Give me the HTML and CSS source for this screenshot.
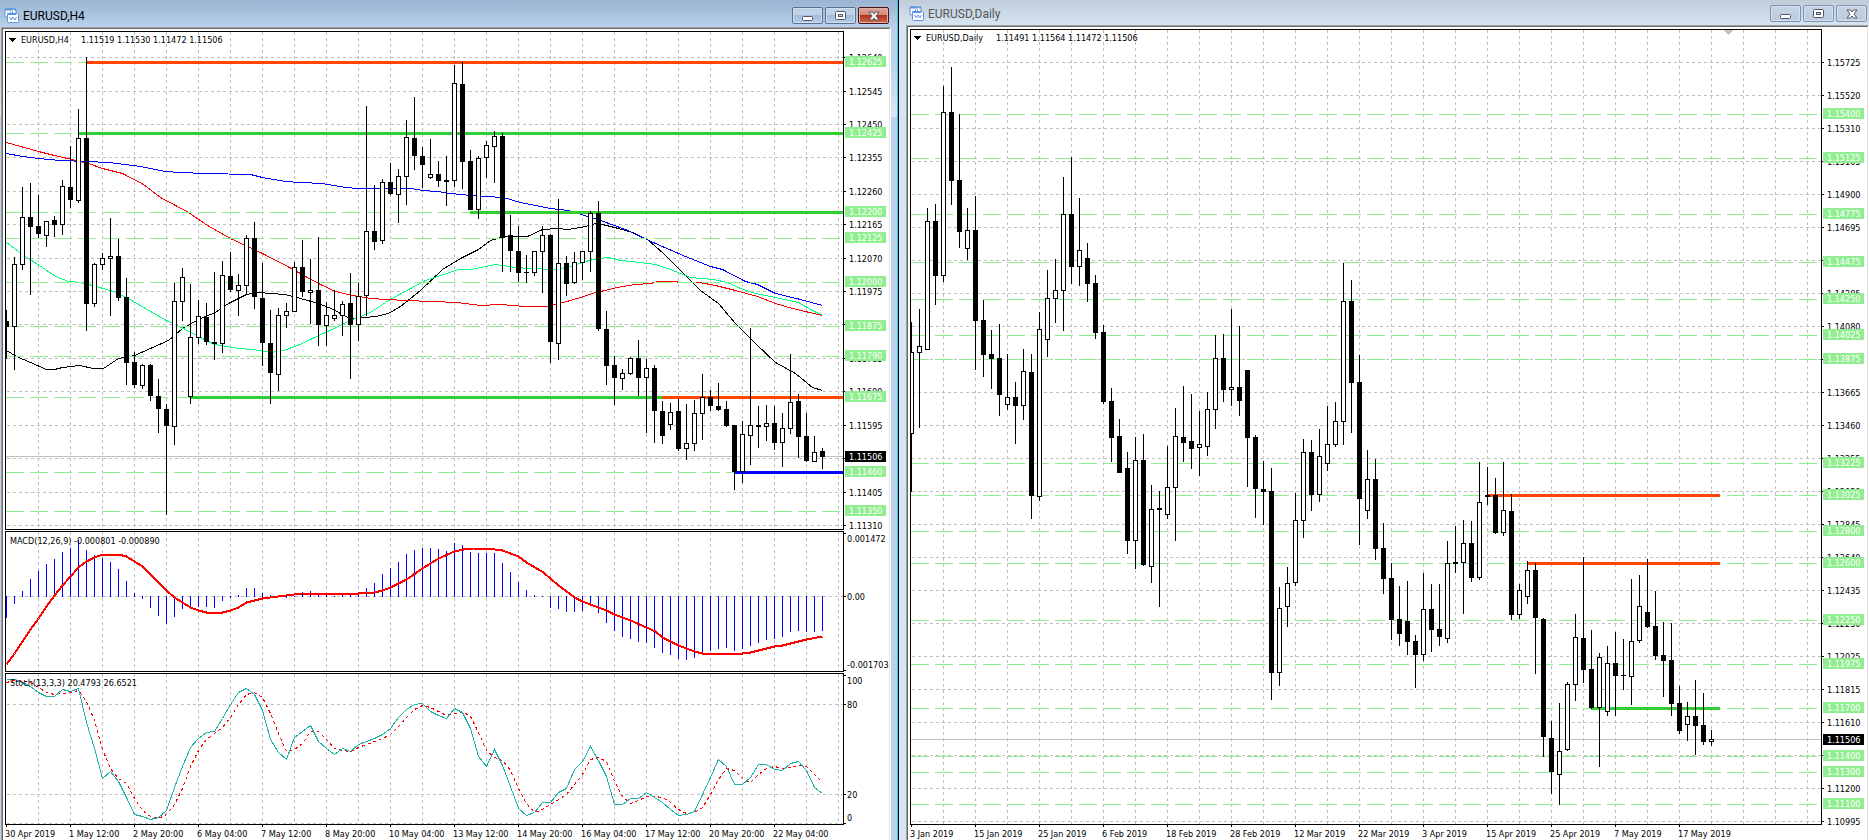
FILE: index.html
```html
<!DOCTYPE html>
<html lang="en">
<head>
    <meta charset="UTF-8">
    <meta name="viewport" content="width=device-width, initial-scale=1.0">
    <title>EURUSD charts</title>
    <link rel="stylesheet" href="styles.css">
</head>
<body>
    <svg class="defs" width="0" height="0">
        <symbol id="icon-chart" viewBox="0 0 15 15">
            <rect x="1" y="1" width="11" height="8" rx="1" fill="#fff" stroke="#5b93e0"/>
            <path d="M1 1.5h11" stroke="#5b93e0" stroke-width="2" stroke-dasharray="8 1"/>
            <path d="M3 6.5h1v-2M6.5 3.500v2h2v-2" fill="none" stroke="#5b93e0"/>
            <rect x="3.500" y="5.500" width="11" height="9" rx="1" fill="#fff" stroke="#5b93e0"/>
            <path d="M4 6.500h8" stroke="#5b93e0"/>
            <path d="M5.500 9l2 3 1.500-3 2 3 1.500-3" fill="none" stroke="#5b93e0"/>
        </symbol>
        <symbol id="icon-min" viewBox="0 0 12 12">
            <rect x="0.500" y="6.500" width="10" height="4" rx="1" fill="#fff" stroke="#535666"/>
        </symbol>
        <symbol id="icon-max" viewBox="0 0 12 12">
            <rect x="0.500" y="1.500" width="10" height="8" rx="1" fill="#fff" stroke="#535666"/>
            <rect x="3.500" y="4.500" width="4" height="2" fill="#c3d4e8" stroke="#535666"/>
        </symbol>
        <symbol id="icon-close" viewBox="0 0 12 12">
            <path d="M1 2h3.500L6 4l1.500-2H11L8 6l3 4H7.500L6 8l-1.500 2H1l3-4z" fill="#fff" stroke="#535666"/>
        </symbol>
    </svg>

    <main class="workspace">
        <section class="window active">
            <header class="title-bar">
                <svg class="app-icon"><use href="#icon-chart"/></svg>
                <h1>EURUSD,H4</h1>
                <button type="button" aria-label="Minimize"><svg><use href="#icon-min"/></svg></button>
                <button type="button" aria-label="Maximize"><svg><use href="#icon-max"/></svg></button>
                <button type="button" class="close" aria-label="Close"><svg><use href="#icon-close"/></svg></button>
            </header>
            <div class="frame">
                <div class="chart">
                    <div class="pane"><svg class="plot price" id="h4Price"></svg><svg class="scale" id="h4PriceScale"></svg></div>
                    <div class="pane"><svg class="plot macd" id="h4Macd"></svg><svg class="scale" id="h4MacdScale"></svg></div>
                    <div class="pane"><svg class="plot stoch" id="h4Stoch"></svg><svg class="scale" id="h4StochScale"></svg></div>
                    <svg class="time" id="h4Time"></svg>
                </div>
            </div>
        </section>

        <section class="window">
            <header class="title-bar">
                <svg class="app-icon"><use href="#icon-chart"/></svg>
                <h1>EURUSD,Daily</h1>
                <button type="button" aria-label="Minimize"><svg><use href="#icon-min"/></svg></button>
                <button type="button" aria-label="Maximize"><svg><use href="#icon-max"/></svg></button>
                <button type="button" class="close" aria-label="Close"><svg><use href="#icon-close"/></svg></button>
            </header>
            <div class="frame">
                <div class="chart">
                    <div class="pane"><svg class="plot daily" id="d1Price"></svg><svg class="scale" id="d1PriceScale"></svg></div>
                    <svg class="time" id="d1Time"></svg>
                </div>
            </div>
        </section>
    </main>

    <script src="script.js"></script>
</body>
</html>
```
FILE: styles.css
```css
* {
    box-sizing: border-box;
}
body {
    margin: 0;
    background-color: #fff;
    font-family: "DejaVu Sans Condensed", "Open Sans", sans-serif;
    overflow: hidden;
}
.defs {
    position: absolute;
}
.workspace {
    display: grid;
    grid-template-columns: 898fr 971fr;
    min-height: 100vh;
}
.window {
    display: flex;
    flex-direction: column;
    min-width: 0;
    padding-left: 7px;
    border-left: 1px solid #000;
    background-color: #d7e4f2;
}
.window.active {
    padding: 0 6px 0 1px;
    border-left: none;
    border-right: 1px solid #35c5e8;
    background: linear-gradient(#b9d1ea 27px, #b9d1ea 60px, #dbe7f5 117px, #b9d1ea 117px);
}

/* title bar */
.title-bar {
    display: flex;
    align-items: center;
    gap: 2px;
    height: 25px;
    margin-left: -7px;
    padding: 5px 2px 3px 10px;
    background: linear-gradient(#bfcddb, #d7e4f2);
}
.active .title-bar {
    height: 27px;
    margin: 0 -6px 0 -1px;
    padding: 7px 8px 3px 4px;
    background: linear-gradient(#99b4d1, #b9d1ea);
}
.app-icon {
    width: 15px;
    height: 15px;
}
.title-bar h1 {
    flex: 1;
    margin: 0 0 0 2px;
    font-family: Roboto, "Open Sans", sans-serif;
    font-size: 12px;
    font-weight: 400;
    line-height: 16px;
    color: #555;
}
.active .title-bar h1 {
    color: #000;
}
.title-bar button {
    display: flex;
    align-items: center;
    justify-content: center;
    width: 31px;
    height: 17px;
    padding: 0;
    border: 1px solid #7f8fb0;
    border-radius: 2px;
    background: linear-gradient(#c5d4e4, #bccbdd);
    box-shadow: inset 0 0 0 1px #d3e0ee;
}
.active .title-bar button {
    border-color: #5d6f8e;
    background: linear-gradient(#bfd2e7 50%, #a5bedb 50%, #b4cde8);
    box-shadow: inset 0 0 0 1px #cfdff0;
}
.active .title-bar .close {
    border-color: #4c1116;
    background: linear-gradient(#dda69a, #cf8675 50%, #b0351f 50%, #cf6a4e);
    box-shadow: inset 0 0 0 1px #e3b0a5;
}
.title-bar button svg {
    width: 12px;
    height: 12px;
}

/* sunken frame round the chart */
.frame {
    flex: 1;
    border: solid;
    border-width: 1px 1px 0 1px;
    border-color: #a0a0a0 #fff #fff #a0a0a0;
}
.chart {
    height: 100%;
    padding: 2px 0 0 2px;
    border: solid;
    border-width: 1px 1px 0 1px;
    border-color: #696969 #e3e3e3 #fff #696969;
    background-color: #fff;
}
.pane {
    display: flex;
    margin-bottom: 1px;
}
.pane:nth-last-child(2) {
    margin-bottom: 0;
}
.plot {
    flex: 1;
    min-width: 0;
    border: 1px solid #000;
}
.scale {
    width: 45px;
}
.price, .price + .scale {
    height: 499px;
}
.macd, .macd + .scale {
    height: 141px;
}
.stoch, .stoch + .scale {
    height: 152px;
}
.daily, .daily + .scale {
    height: 796px;
}
.daily + .scale {
    overflow: visible;
}
.time {
    display: block;
    width: 100%;
    height: 15px;
}

/* drawing */
.plot g, .scale g, .time g {
    shape-rendering: crispEdges;
}
text {
    font-size: 9px;
    fill: #000;
}
.grid {
    stroke: #c0c0c0;
    stroke-dasharray: 3 3;
}
.bid {
    stroke: #c0c0c0;
}
.level {
    stroke: #90ee90;
    stroke-dasharray: 18 6;
}
.tick, .wick {
    stroke: #000;
}
.bear {
    fill: #000;
}
.bull {
    fill: #fff;
    stroke: #000;
}
.tag {
    fill: #90ee90;
}
.tag-bid {
    fill: #000;
}
.tag-text {
    fill: #fff;
}
.marker {
    fill: #c0c0c0;
}
.line {
    fill: none;
}
.orange {
    stroke: #ff4500;
    stroke-width: 3;
}
.lime {
    stroke: #32cd32;
    stroke-width: 3;
}
.navy {
    stroke: #0000ff;
    stroke-width: 3;
}
.ma-red {
    stroke: #ff0000;
}
.ma-blue, .bar {
    stroke: #0000ff;
}
.ma-black {
    stroke: #000;
}
.ma-green {
    stroke: #00ff7f;
}
.macd-signal {
    stroke: #ff0000;
    stroke-width: 2;
}
.stoch-main {
    stroke: #20b2aa;
}
.stoch-signal {
    stroke: #ff0000;
    stroke-dasharray: 3 3;
}
```
FILE: script.js
```js
const NS = 'http://www.w3.org/2000/svg';
const STEP = 8;
const FAR = 4000;

// candles: [high, top, bottom, low, bull]
const h4Candles = [
    [310,321,327,359,0],[257,264,326,370,1],[187,217,264,270,1],[183,217,227,295,0],[195,226,234,238,0],
    [221,221,235,247,1],[216,220,225,237,0],[180,186,224,235,1],[146,187,200,208,0],[109,138,200,203,1],
    [57,138,304,331,0],[263,264,303,307,1],[253,258,264,270,1],[218,256,258,316,1],[239,256,298,301,0],
    [278,297,363,385,0],[352,362,385,388,0],[364,365,385,389,1],[364,365,396,401,0],[379,396,409,433,0],
    [404,409,426,515,0],[283,301,426,445,1],[268,277,301,321,1],[284,337,396,404,1],[300,316,337,344,1],
    [303,317,342,345,0],[272,342,344,360,0],[261,275,343,353,1],[252,276,290,292,0],[274,285,290,316,1],
    [235,238,285,295,1],[222,238,297,309,0],[263,298,343,366,0],[310,343,373,404,0],[308,315,374,391,1],
    [303,311,315,328,1],[262,267,311,311,1],[240,267,292,297,0],[259,290,292,324,1],[237,290,325,346,0],
    [302,315,325,346,1],[290,315,318,321,1],[301,304,315,336,1],[273,303,325,379,0],[283,296,324,341,1],
    [106,231,295,316,1],[185,231,242,250,0],[179,182,240,244,1],[163,182,194,195,0],[169,176,194,223,1],
    [120,137,176,205,1],[97,138,156,170,0],[147,156,165,188,0],[139,174,177,179,1],[161,174,181,187,0],
    [156,180,182,206,0],[65,83,180,187,1],[62,84,162,189,0],[150,161,210,210,0],[156,158,209,219,1],
    [141,145,157,178,1],[131,136,146,183,1],[133,136,237,272,0],[215,235,251,272,0],[226,251,273,282,0],
    [255,272,273,283,0],[251,251,272,276,1],[226,235,251,293,1],[234,235,342,363,0],[199,263,343,360,1],
    [256,263,284,296,0],[252,262,282,284,1],[251,251,262,280,1],[211,213,251,272,1],[201,213,329,331,0],
    [311,329,366,385,0],[356,365,378,405,0],[369,373,378,390,1],[357,358,373,375,1],[340,358,378,396,0],
    [359,368,377,433,1],[365,368,411,443,0],[401,411,436,444,0],[403,412,424,430,1],[399,411,449,451,0],
    [404,443,448,460,1],[400,413,443,451,1],[374,397,413,440,1],[390,397,406,411,0],[383,406,410,411,0],
    [401,409,426,427,0],[425,425,472,490,0],[421,434,471,483,1],[328,425,435,465,1],[406,425,427,448,0],
    [405,423,426,441,1],[406,423,443,450,0],[413,428,442,467,1],[354,402,428,434,1],[394,401,437,458,0],
    [413,436,461,462,0],[436,452,461,462,1],[448,451,457,469,0]
];
const d1Candles = [
    [322,352,433,492,1],[309,346,352,428,1],[208,221,349,349,1],[204,221,276,305,0],[86,112,275,282,1],
    [67,112,181,205,0],[114,180,232,248,0],[208,230,248,260,1],[196,230,321,370,0],[300,320,355,377,0],
    [330,354,359,389,0],[324,358,395,416,0],[354,397,404,410,1],[382,397,406,444,0],[349,371,405,420,1],
    [354,372,496,519,0],[312,329,496,501,1],[270,298,339,357,1],[259,290,298,323,1],[177,214,290,331,1],
    [157,214,267,284,0],[198,250,266,286,1],[243,258,284,302,0],[275,283,333,339,0],[325,332,402,404,0],
    [388,401,438,462,0],[419,436,473,473,0],[452,468,541,554,0],[437,460,540,569,1],[434,460,565,566,0],
    [485,509,566,583,1],[491,508,510,607,0],[446,487,514,519,1],[408,436,487,541,1],[386,437,443,462,0],
    [394,441,449,469,0],[411,444,447,476,1],[392,409,446,456,1],[335,358,409,429,1],[334,358,390,402,0],
    [309,387,389,406,1],[326,387,401,416,0],[370,370,438,487,0],[435,437,489,518,0],[461,489,492,525,0],
    [468,491,673,700,0],[587,608,672,686,1],[567,583,606,627,1],[493,520,582,586,1],[439,452,520,538,1],
    [440,452,495,511,0],[429,456,494,502,1],[406,444,463,471,1],[402,421,444,447,1],[263,301,421,445,1],
    [280,301,383,433,0],[355,382,499,545,0],[450,479,510,519,1],[459,479,549,560,0],[523,548,579,594,0],
    [563,578,620,640,0],[586,619,634,646,0],[581,621,642,655,0],[635,641,655,688,0],[573,609,654,661,1],
    [584,609,630,652,0],[584,629,637,646,0],[541,563,638,643,1],[526,562,564,573,0],[520,543,562,614,1],
    [521,543,578,582,0],[462,502,577,580,1],[467,495,497,505,0],[478,495,533,534,0],[462,510,532,536,1],
    [494,511,615,620,0],[584,590,614,619,1],[561,570,596,604,1],[563,570,618,674,0],[618,619,737,757,0],
    [721,738,772,794,0],[703,751,774,805,1],[682,684,749,751,1],[614,637,684,701,1],[557,638,670,683,0],
    [630,669,708,709,0],[653,657,707,767,1],[646,663,711,716,1],[632,663,676,716,0],[639,675,676,690,0],
    [579,641,676,705,1],[575,606,640,643,1],[559,612,627,628,0],[591,626,656,660,0],[622,655,661,697,0],
    [623,660,704,716,0],[686,703,731,734,0],[702,716,724,741,1],[680,716,726,755,0],[693,725,742,745,0],
    [730,739,741,746,1]
];

// indicator lines: x, y pairs
const maRed = '0,142 32,151 48,155 70,160 82,163 96,168 116,173 137,184 154,197 182,212 201,225 224,238 256,253 285,268 299,276 314,284 329,291 346,295 364,298 399,300 451,302 474,305 494,304 519,306 539,306 557,302 574,297 589,292 594,291 611,287 629,284 644,283 648,282 652,281 669,281 673,282 693,282 709,285 729,290 751,296 769,303 786,308 816,315';
const maBlue = '0,153 16,156 32,158 54,160 80,161 102,162 134,166 159,171 174,172 199,173 244,174 256,177 279,181 294,182 316,183 339,187 351,188 404,188 416,190 431,191 444,193 464,195 479,196 497,197 514,202 544,208 562,210 575,214 594,220 619,229 634,236 649,243 679,256 704,266 716,269 739,281 751,284 769,293 794,299 816,305';
const maBlack = '0,350 10,356 24,362 40,369 48,369 56,367 73,365 87,368 97,368 112,358 128,355 144,348 162,340 176,328 194,318 209,312 222,303 240,294 252,292 264,293 279,294 294,298 312,303 327,309 339,316 346,318 369,316 382,313 394,306 414,290 436,269 456,257 472,249 484,240 494,237 504,236 521,236 536,229 551,228 562,229 579,226 589,223 596,224 612,228 626,232 641,239 657,253 672,268 694,290 712,303 729,323 749,343 769,362 789,373 806,387 816,390';
const maGreen = '0,242 16,254 39,269 49,276 62,281 74,282 90,286 110,292 127,301 144,311 160,320 177,328 194,337 208,344 232,348 247,349 264,352 277,350 291,345 319,332 344,320 364,312 382,300 404,288 419,280 452,269 464,269 479,266 489,264 509,267 524,268 549,269 564,266 579,261 591,258 602,257 614,260 634,262 649,264 664,269 684,277 707,279 721,282 734,288 749,293 769,297 792,302 806,310 816,315';
const macdBars = [618,604,591,579,571,564,559,552,548,540,550,555,558,562,569,581,593,599,608,616,624,617,609,609,607,607,608,601,598,595,588,588,593,595,596,598,597,592,591,593,594,597,595,594,593,588,583,574,568,562,554,550,548,548,549,551,543,545,552,553,553,553,563,572,582,590,595,596,608,609,612,612,611,605,613,623,631,637,639,642,643,648,653,655,659,660,658,653,651,649,648,651,649,646,643,640,639,637,632,631,632,632,631];
const macdSignal = '0,664 8,653 24,629 32,618 40,606 48,595 56,585 64,576 72,567 80,561 88,557 96,554 112,554 120,556 136,566 144,574 152,582 160,590 168,597 176,602 184,607 192,610 200,612 216,612 224,610 232,607 240,602 256,598 272,596 296,593 352,593 368,592 376,590 384,587 400,579 416,568 432,558 448,551 457,549 467,548 481,548 496,550 512,556 520,562 537,572 552,585 568,597 576,601 600,610 608,614 624,620 640,627 649,631 656,637 672,645 688,651 696,653 736,653 744,652 768,646 776,645 800,639 816,636';
const stochMain = [679,679,682,686,692,696,696,689,691,688,722,748,778,771,781,797,814,816,819,817,810,787,766,747,738,732,731,718,704,692,688,694,710,739,752,759,737,731,725,741,748,754,748,751,744,741,738,734,728,717,709,704,703,711,715,718,708,712,728,756,766,749,765,786,808,815,812,802,802,792,788,769,761,746,760,776,804,804,798,798,792,797,802,809,815,814,811,794,777,759,766,784,784,777,764,764,769,770,763,761,770,787,793];
const stochSignal = [682,680,680,682,687,692,694,693,692,690,701,720,749,768,778,783,798,810,816,818,814,804,788,766,750,739,733,727,717,704,694,692,697,713,733,751,749,743,731,731,739,748,750,751,747,744,741,738,734,726,717,709,705,707,711,715,713,711,716,732,750,757,760,770,788,803,812,809,804,799,794,784,774,759,757,761,781,796,803,800,796,796,797,802,809,813,812,807,794,779,768,770,778,782,774,768,766,768,767,765,766,774,782];

// price scales: [y, price]
const h4Grid = [[57,'1.12640'],[91,'1.12545'],[124,'1.12450'],[157,'1.12355'],[191,'1.12260'],[224,'1.12165'],[258,'1.12070'],[291,'1.11975'],[324,'1.11880'],[358,'1.11785'],[391,'1.11690'],[425,'1.11595'],[458,'1.11500'],[492,'1.11405'],[525,'1.11310']];
const h4Levels = [[62,'1.12625'],[133,'1.12425'],[212,'1.12200'],[238,'1.12125'],[282,'1.12000'],[326,'1.11875'],[356,'1.11790'],[397,'1.11675'],[472,'1.11460'],[511,'1.11350']];
const d1Prices = ['1.15725','1.15520','1.15310','1.15105','1.14900','1.14695','1.14490','1.14285','1.14080','1.13870','1.13665','1.13460','1.13255','1.13050','1.12845','1.12640','1.12435','1.12230','1.12025','1.11815','1.11610','1.11405','1.11200','1.10995'];
const d1Grid = d1Prices.map((price, i) => [62 + i * 33, price]);
const d1Levels = [[114,'1.15400'],[158,'1.15125'],[214,'1.14775'],[262,'1.14475'],[299,'1.14250'],[335,'1.14025'],[359,'1.13875'],[463,'1.13225'],[495,'1.13025'],[531,'1.12800'],[563,'1.12600'],[620,'1.12250'],[664,'1.11975'],[708,'1.11700'],[756,'1.11400'],[772,'1.11300'],[804,'1.11100']];

const h4Dates = ['30 Apr 2019','1 May 12:00','2 May 20:00','6 May 04:00','7 May 12:00','8 May 20:00','10 May 04:00','13 May 12:00','14 May 20:00','16 May 04:00','17 May 12:00','20 May 20:00','22 May 04:00'];
const d1Dates = ['3 Jan 2019','15 Jan 2019','25 Jan 2019','6 Feb 2019','18 Feb 2019','28 Feb 2019','12 Mar 2019','22 Mar 2019','3 Apr 2019','15 Apr 2019','25 Apr 2019','7 May 2019','17 May 2019'];

function add(parent, tag, attrs, content) {
    const el = document.createElementNS(NS, tag);
    for (const key in attrs) el.setAttribute(key, attrs[key]);
    if (content) el.textContent = content;
    parent.appendChild(el);
    return el;
}

// every pane is drawn in chart coordinates, shifted up by its own top
function layer(id, top) {
    return add(document.getElementById(id), 'g', { transform: `translate(0 ${-top})` });
}

function hline(g, cls, y, x1 = 0, x2 = FAR) {
    add(g, 'line', { class: cls, x1: x1, x2: x2, y1: y + 0.5, y2: y + 0.5 });
}

function vline(g, cls, x, y1, y2) {
    add(g, 'line', { class: cls, x1: x + 0.5, x2: x + 0.5, y1: y1, y2: y2 });
}

function columns(g, top, bottom) {
    for (let x = 32; x < FAR; x += 32) vline(g, 'grid', x, top, bottom);
}

function curve(g, cls, points) {
    if (Array.isArray(points)) points = points.map((y, i) => `${i * STEP},${y}`).join(' ');
    add(g, 'polyline', { class: 'line ' + cls, points: points, transform: 'translate(0.5 0.5)' });
}

function label(g, x, y, content, cls = '') {
    add(g, 'text', { x: x, y: y, class: cls }, content);
}

function info(g, y, name, valuesX) {
    add(g, 'path', { d: `M3 ${y - 5}h7l-3.500 4z` });
    label(g, 15, y, name[0]);
    label(g, valuesX, y, name[1]);
}

function drawCandles(g, candles) {
    candles.forEach(([high, top, bottom, low, bull], i) => {
        const x = i * STEP;
        vline(g, 'wick', x, high, low);
        if (bull) {
            add(g, 'rect', { class: 'bull', x: x - 1.5, y: top + 0.5, width: 4, height: bottom - top });
        } else {
            add(g, 'rect', { class: 'bear', x: x - 2, y: top, width: 5, height: bottom - top });
        }
    });
}

function drawScale(id, top, grid, levels, bid) {
    const g = layer(id, top);
    grid.forEach(([y, price]) => {
        hline(g, 'tick', y, 0, 2);
        label(g, 5, y + 4, price);
    });
    levels.forEach(([y, price]) => {
        add(g, 'rect', { class: 'tag', x: 1, y: y - 6, width: 41, height: 11 });
        label(g, 5, y + 3, price, 'tag-text');
    });
    add(g, 'rect', { class: 'tag-bid', x: 1, y: bid - 5, width: 41, height: 11 });
    label(g, 5, bid + 4, '1.11506', 'tag-text');
}

function drawTime(id, dates) {
    const g = layer(id, 0);
    dates.forEach((date, i) => {
        vline(g, 'tick', i * 64 + 1, 0, 2);
        label(g, i * 64, 12, date);
    });
}

// H4 price
let g = layer('h4Price', 32);
columns(g, 32, 529);
h4Grid.forEach(([y]) => hline(g, 'grid', y, 1));
curve(g, 'ma-black', maBlack);
curve(g, 'ma-green', maGreen);
curve(g, 'ma-red', maRed);
curve(g, 'ma-blue', maBlue);
h4Levels.forEach(([y]) => hline(g, 'level', y));
hline(g, 'bid', 456);
hline(g, 'orange', 62, 81);
hline(g, 'lime', 133, 73);
hline(g, 'lime', 212, 464);
hline(g, 'lime', 397, 184, 656);
hline(g, 'orange', 397, 656);
hline(g, 'navy', 472, 728);
drawCandles(g, h4Candles);
info(g, 43, ['EURUSD,H4', '1.11519 1.11530 1.11472 1.11506'], 75);
drawScale('h4PriceScale', 31, h4Grid, h4Levels, 456);

// MACD
g = layer('h4Macd', 532);
columns(g, 532, 671);
hline(g, 'grid', 596, 1);
macdBars.forEach((y, i) => vline(g, 'bar', i * STEP, Math.min(y, 596), Math.max(y, 597)));
curve(g, 'macd-signal', macdSignal);
label(g, 4, 544, 'MACD(12,26,9) -0.000801 -0.000890');
g = layer('h4MacdScale', 531);
[533, 596, 670].forEach(y => hline(g, 'tick', y, 0, 2));
label(g, 3, 542, '0.001472');
label(g, 3, 600, '0.00');
label(g, 3, 668, '-0.001703');

// Stochastic
g = layer('h4Stoch', 674);
columns(g, 674, 824);
[704, 794, 823].forEach(y => hline(g, 'grid', y, 1));
curve(g, 'stoch-signal', stochSignal);
curve(g, 'stoch-main', stochMain);
label(g, 4, 686, 'Stoch(13,3,3) 20.4793 26.6521');
g = layer('h4StochScale', 673);
[675, 704, 794, 823].forEach(y => hline(g, 'tick', y, 0, 2));
label(g, 3, 684, '100');
label(g, 3, 708, '80');
label(g, 3, 798, '20');
label(g, 3, 821, '0');
drawTime('h4Time', h4Dates);

// Daily price
g = layer('d1Price', 30);
columns(g, 30, 824);
d1Grid.forEach(([y]) => hline(g, 'grid', y, 1));
d1Levels.forEach(([y]) => hline(g, 'level', y));
hline(g, 'bid', 739);
hline(g, 'orange', 495, 576, 809);
hline(g, 'orange', 563, 616, 809);
hline(g, 'lime', 708, 680, 809);
drawCandles(g, d1Candles);
add(g, 'path', { class: 'marker', d: 'M813 30h9l-4.500 5z' });
info(g, 41, ['EURUSD,Daily', '1.11491 1.11564 1.11472 1.11506'], 85);
drawScale('d1PriceScale', 29, d1Grid, d1Levels, 739);
drawTime('d1Time', d1Dates);
```
